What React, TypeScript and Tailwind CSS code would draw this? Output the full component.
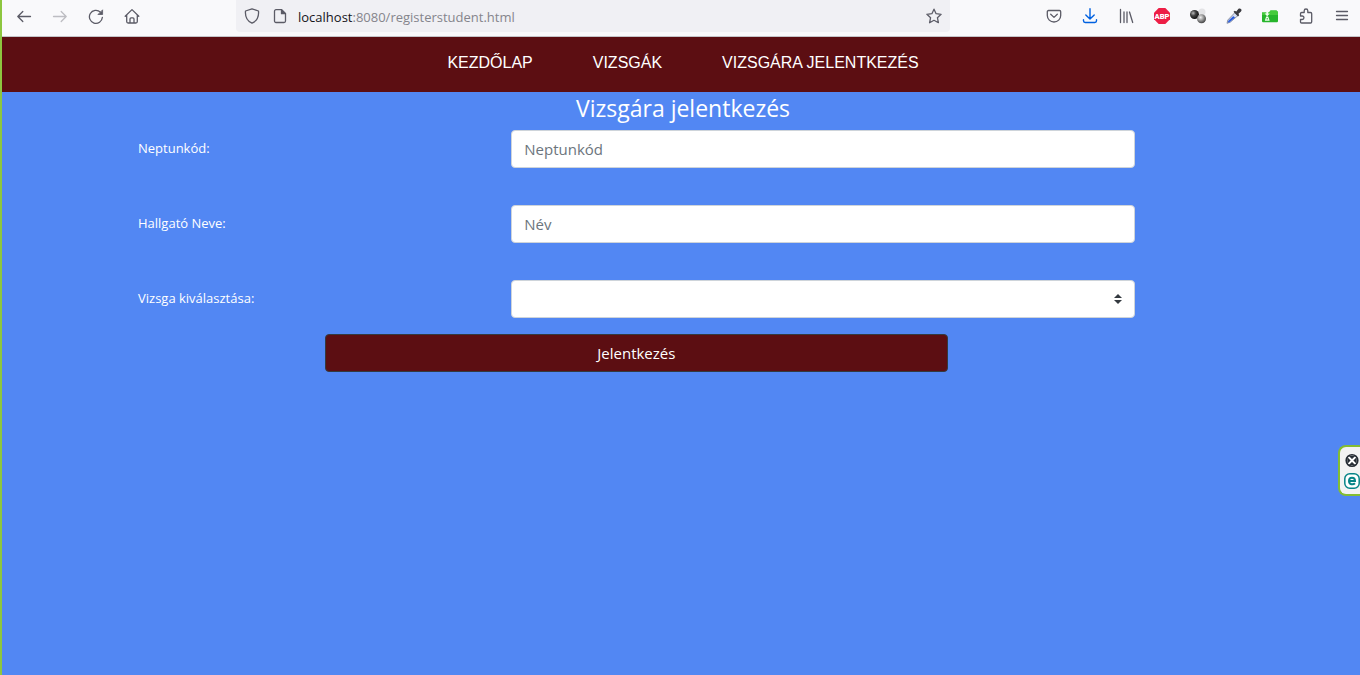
import type { ReactNode } from "react";

function ToolButton({ label, children, className = "text-[#5b5b66]" }: { label: string; children: ReactNode; className?: string }) {
  return (
    <button type="button" aria-label={label} className={`flex h-8 w-9 items-center justify-center ${className}`}>
      {children}
    </button>
  );
}

function Stroke({ children, width = 1.3 }: { children: ReactNode; width?: number }) {
  return (
    <svg
      width="16"
      height="16"
      viewBox="0 0 16 16"
      fill="none"
      stroke="currentColor"
      strokeWidth={width}
      strokeLinecap="round"
      strokeLinejoin="round"
      aria-hidden="true"
    >
      {children}
    </svg>
  );
}

function BrowserBar() {
  return (
    <header className="flex h-[37px] items-start border-b border-[#c4c4c8] bg-[#f9f9fb] pl-1">
      <div className="flex">
        <ToolButton label="Back">
          <Stroke>
            <path d="M14.500 8.500H1.800M6.800 3.500l-5 5 5 5" />
          </Stroke>
        </ToolButton>
        <ToolButton label="Forward" className="text-[#bdbdc2]">
          <Stroke>
            <path d="M1.500 8.500h12.700M9.200 3.500l5 5-5 5" />
          </Stroke>
        </ToolButton>
        <ToolButton label="Reload">
          <Stroke>
            <path d="M14.400 9.300a6.500 6.500 0 1 1-2-5.200" />
            <path d="M14.600 2.200v4.300h-4.300z" fill="currentColor" strokeWidth="0.8" />
          </Stroke>
        </ToolButton>
        <ToolButton label="Home">
          <Stroke>
            <path d="M1.200 8.300 8 1.600l6.800 6.700M2.700 7.200v6.300c0 .900.500 1.500 1.400 1.500h7.800c.900 0 1.400-.600 1.400-1.500V7.200M6 15v-4c0-.800.400-1.200 1.100-1.200h1.800c.700 0 1.100.400 1.100 1.200v4" />
          </Stroke>
        </ToolButton>
      </div>
      <div className="mx-[86px] flex h-8 flex-1 items-center rounded-b bg-[#f0f0f4] px-2 text-[#5b5b66]">
        <Stroke>
          <path d="M8 .800 14.500 3c.500 5.500-1.500 9.800-6.500 12.200C3 12.800 1 8.500 1.500 3z" />
        </Stroke>
        <span className="ml-3 flex">
          <Stroke>
            <path d="M4 1.700h5.500l4 4V13a1.500 1.500 0 0 1-1.500 1.500H4A1.500 1.500 0 0 1 2.500 13V3.200A1.500 1.500 0 0 1 4 1.700z" />
            <path d="M9.500 1.700v4h4z" fill="currentColor" />
          </Stroke>
        </span>
        <span className="ml-2.5 flex-1 pt-0.5 text-[13px] leading-5 text-[#85858c]">
          <span className="text-[#15141a]">localhost</span>:8080/registerstudent.html
        </span>
        <button type="button" aria-label="Bookmark">
          <Stroke>
            <path d="m8 1.200 2.100 4.500 5 .600-3.700 3.400 1 5L8 12.300l-4.400 2.400 1-5L.900 6.300l5-.600z" />
          </Stroke>
        </button>
      </div>
      <div className="flex">
        <ToolButton label="Pocket">
          <Stroke>
            <path d="M2.500 2.500h11c.700 0 1.200.500 1.200 1.200v3.800a6.700 6.500 0 0 1-13.400 0V3.700c0-.700.500-1.200 1.200-1.200z" />
            <path d="M4.700 6.300 8 9.400l3.300-3.100" />
          </Stroke>
        </ToolButton>
        <ToolButton label="Downloads" className="text-[#0061e0]">
          <Stroke width={1.4}>
            <path d="M8 .800v10M3.800 7 8 11l4.200-4M1.500 11.800v1c0 1 .700 1.700 1.700 1.700h9.600c1 0 1.700-.700 1.700-1.700v-1" />
          </Stroke>
        </ToolButton>
        <ToolButton label="Library">
          <Stroke>
            <path d="M2.500 1.500v13M6 4v10.500M9 4v10.500M11.500 4l3.200 10.500" />
          </Stroke>
        </ToolButton>
        <ToolButton label="Adblock">
          <svg width="16" height="16" viewBox="0 0 16 16" aria-hidden="true">
            <path d="M4.700 0h6.600L16 4.700v6.600L11.300 16H4.700L0 11.300V4.700z" fill="#ed1e45" />
            <text x="8" y="10.800" textAnchor="middle" fontFamily="Roboto" fontWeight="900" fontSize="7.600" fill="#fff">ABP</text>
          </svg>
        </ToolButton>
        <ToolButton label="Molecule">
          <svg width="16" height="16" viewBox="0 0 16 16" aria-hidden="true">
            <defs>
              <radialGradient id="dark" cx="35%" cy="35%" r="65%">
                <stop offset="0" stopColor="#bbb" />
                <stop offset=".45" stopColor="#444" />
                <stop offset="1" stopColor="#111" />
              </radialGradient>
              <radialGradient id="grey" cx="40%" cy="35%" r="65%">
                <stop offset="0" stopColor="#eee" />
                <stop offset=".5" stopColor="#999" />
                <stop offset="1" stopColor="#444" />
              </radialGradient>
            </defs>
            <circle cx="12" cy="4" r="3.500" fill="#e3e3e5" />
            <circle cx="4.500" cy="6.500" r="4.500" fill="url(#dark)" />
            <circle cx="11.500" cy="10.800" r="4.500" fill="url(#grey)" />
          </svg>
        </ToolButton>
        <ToolButton label="Color picker">
          <svg width="16" height="16" viewBox="0 0 16 16" aria-hidden="true">
            <path d="m9 4.500 3 3L4.500 14 1 15.300 1.800 12z" fill="#d8dff2" stroke="#777f91" strokeWidth=".8" />
            <path d="m7.200 8.500 1.500 1L3.700 13.700l-1.600.500.600-1.500z" fill="#2458dc" stroke="#2458dc" strokeWidth=".6" />
            <path d="m7.500 3.800 1.300-1.100 1.500.800L12.500.800c2-1.300 4 1 2.500 2.600l-2.500 2.300.700 1.600-1.200 1.200z" fill="#3b3b40" />
          </svg>
        </ToolButton>
        <ToolButton label="Capture">
          <svg width="16" height="16" viewBox="0 0 16 16" aria-hidden="true">
            <path d="M0 4.500h7L8.500 2.500h6L16 4v9.500l-.8.700H.8l-.8-.7z" fill="#27b52c" />
            <path d="M0 4.500h7L8.500 2.500h6L16 4v3H0z" fill="#45cb3c" />
            <path d="M4.300 3.200h1.800v2.200h1.700L5.200 8.200 2.600 5.400h1.700z" fill="#efffed" />
            <path d="M4.200 8.500h2l1.500 4.300H2.800z" fill="#efffed" />
            <path d="M5.200 10v1.500" stroke="#27b52c" />
          </svg>
        </ToolButton>
        <ToolButton label="Extensions">
          <Stroke>
            <path d="M2.500 5.700c0-.800.400-1.200 1.200-1.200h2.500V2.800a1.800 1.800 0 0 1 3.600 0v1.700h2.700c.800 0 1.200.400 1.200 1.200v8.100c0 .800-.400 1.200-1.200 1.200H3.700c-.800 0-1.200-.400-1.200-1.200v-2.300h1.700a1.700 1.700 0 0 0 0-3.500H2.500z" />
          </Stroke>
        </ToolButton>
        <ToolButton label="Menu">
          <Stroke>
            <path d="M2.500 3.500h11M2.500 7.500h11M2.500 11.500h11" />
          </Stroke>
        </ToolButton>
      </div>
    </header>
  );
}

const control = "h-[38px] w-full rounded border border-[#ced4da] bg-white px-3 text-[15px] text-[#495057] placeholder:text-[#6c757d]";

function Field({ id, label, children }: { id: string; label: string; children: ReactNode }) {
  return (
    <div className="grid grid-cols-12 items-center">
      <label htmlFor={id} className="col-span-4 px-[15px] pb-0.5 text-[13px] leading-5">
        {label}
      </label>
      <div className="relative col-span-7 px-[15px]">{children}</div>
    </div>
  );
}

export default function App() {
  return (
    <div className="relative min-h-screen border-l-2 border-[#8dc63f] bg-[#5287f3] font-['Open_Sans','Noto_Sans',sans-serif] text-white">
      <BrowserBar />
      <nav className="flex h-[55px] justify-center gap-[60px] bg-[#5c0e12] pt-3 pl-1 font-['Liberation_Sans',Arial,sans-serif] text-base leading-7">
        <a href="#home">KEZDŐLAP</a>
        <a href="#exams">VIZSGÁK</a>
        <a href="#register">VIZSGÁRA JELENTKEZÉS</a>
      </nav>
      <main className="pl-1">
        <h1 className="pt-0.5 text-center text-[23px] leading-7">Vizsgára jelentkezés</h1>
        <form className="mx-auto max-w-[1120px] pt-2">
          <div className="flex flex-col gap-[37px]">
            <Field id="code" label="Neptunkód:">
              <input id="code" type="text" placeholder="Neptunkód" className={control} />
            </Field>
            <Field id="name" label="Hallgató Neve:">
              <input id="name" type="text" placeholder="Név" className={control} />
            </Field>
            <Field id="exam" label="Vizsga kiválasztása:">
              <select id="exam" className={`${control} appearance-none`}>
                <option value=""></option>
              </select>
              <svg className="pointer-events-none absolute top-3.5 right-7 text-[#343a40]" width="8" height="10" viewBox="0 0 8 10" fill="currentColor" aria-hidden="true">
                <path d="M0 4 4 0l4 4zM0 6l4 4 4-4z" />
              </svg>
            </Field>
          </div>
          <div className="mt-4 grid grid-cols-12">
            <div className="col-span-7 col-start-3 px-[15px]">
              <button type="button" className="h-[38px] w-full rounded border border-[#343a40] bg-[#5c0e12] text-[15px]">
                Jelentkezés
              </button>
            </div>
          </div>
        </form>
      </main>
      <aside className="absolute top-[445px] right-0 flex h-[51px] w-[22px] flex-col items-end justify-center gap-1 rounded-l-lg border-2 border-r-0 border-[#84bd33] bg-[#f3f3f3]">
        <button type="button" aria-label="Close">
          <svg width="16" height="16" viewBox="0 0 16 16" aria-hidden="true">
            <circle cx="8" cy="7.500" r="5.800" fill="#fff" stroke="#252b33" strokeWidth="1.600" />
            <path d="M8 5.800 5.300 3.100h5.400zM8 9.200l-2.700 2.700h5.400zM6.300 7.500 3.600 4.800v5.400zM9.700 7.500l2.700-2.700v5.400z" fill="#252b33" stroke="#252b33" strokeWidth=".6" />
          </svg>
        </button>
        <button type="button" aria-label="Open assistant">
          <svg width="16" height="16" viewBox="0 0 16 16" aria-hidden="true">
            <rect x=".8" y=".8" width="14.400" height="14.400" rx="5" fill="#fff" stroke="#078487" strokeWidth="1.500" />
            <path d="M4.800 8h6.200c0-4.500-6-4.500-6 0 0 4 4.300 3.900 6 2.300" fill="none" stroke="#078487" strokeWidth="2" />
          </svg>
        </button>
      </aside>
    </div>
  );
}
